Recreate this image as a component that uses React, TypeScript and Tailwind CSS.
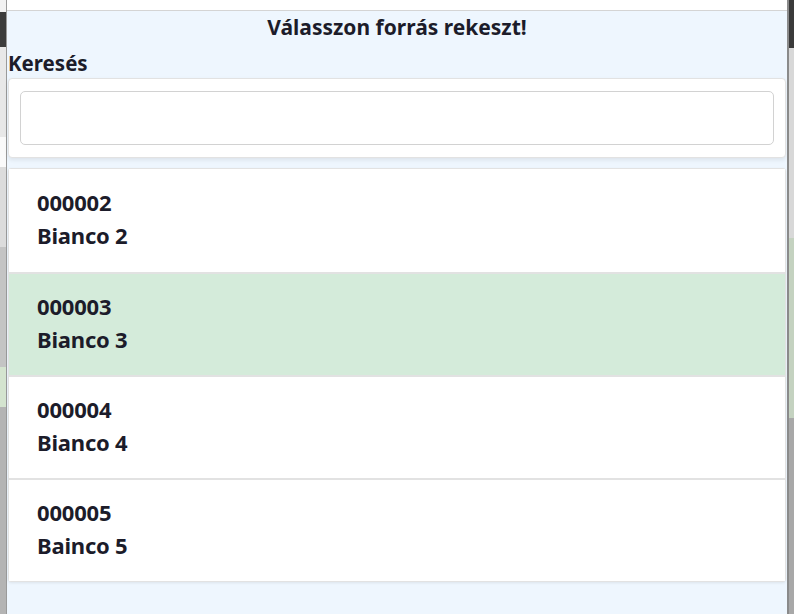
import React from 'react';

const items = [
  { code: '000002', name: 'Bianco 2', selected: false },
  { code: '000003', name: 'Bianco 3', selected: true },
  { code: '000004', name: 'Bianco 4', selected: false },
  { code: '000005', name: 'Bainco 5', selected: false },
];

export default function App() {
  return (
    <div
      className="flex w-[794px] h-[614px] overflow-hidden bg-[#c8c8c8] text-[#1c1c2a]"
      style={{ fontFamily: '"Noto Sans", "Open Sans", sans-serif' }}
    >
      {/* background page peeking on the left */}
      <div className="flex flex-col w-[7px] shrink-0 bg-[#d6d6d6] border-r border-[#9a9a9a]">
        <div className="h-[12px] bg-[#f2f2f2]" />
        <div className="h-[35px] bg-[#3c3c3c]" />
        <div className="h-[90px] bg-[#e8e8e8]" />
        <div className="h-[30px] bg-[#fafafa]" />
        <div className="h-[80px] bg-[#dcdcdc]" />
        <div className="h-[120px] bg-[#c4c4c4]" />
        <div className="h-[40px] bg-[#d4e4cf]" />
        <div className="flex-1 bg-[#b4b4b4]" />
      </div>

      {/* modal */}
      <div className="flex flex-col w-[780px] shrink-0 bg-[#eef6fe]">
        <div className="h-[11px] bg-white border-b border-[#d4d4d4]" />
        <div className="h-[34px] flex items-center justify-center text-[21px] font-bold">
          Válasszon forrás rekeszt!
        </div>
        <div className="h-[33px] flex items-center pl-[1px] pt-[4px] text-[20.5px] font-bold">Keresés</div>

        <div className="mx-[1px] bg-white border border-[#e2e2e2] rounded-[4px] shadow-[0_2px_4px_rgba(0,0,0,0.08)] px-[11px] py-[12px]">
          <input className="block w-full h-[54px] rounded-[5px] border border-[#d2d2d2] bg-white outline-none px-3" />
        </div>

        <div className="mt-[10px] mx-[1px] bg-white border border-[#e2e2e2] rounded-[3px] shadow-[0_1px_3px_rgba(0,0,0,0.08)]">
          {items.map((it, i) => (
            <div
              key={it.code}
              className={
                'h-[103px] flex flex-col justify-center pl-[28px] pb-[3px] gap-[8px] text-[22px] font-bold leading-[25px] tracking-[-0.2px] ' +
                (i > 0 ? 'border-t-2 border-[#e2e2e2] ' : '') +
                (it.selected ? 'bg-[#d4ebda]' : 'bg-white')
              }
            >
              <div>{it.code}</div>
              <div>{it.name}</div>
            </div>
          ))}
        </div>
        <div className="flex-1" />
      </div>

      {/* background page peeking on the right */}
      <div className="flex flex-col flex-1 border-l-2 border-[#8a8a8a] bg-[#cfcfcf]">
        <div className="h-[48px] bg-[#3a3a3a]" />
        <div className="h-[190px] bg-[#d8d8d8]" />
        <div className="h-[180px] bg-[#c4d2c0]" />
        <div className="flex-1 bg-[#a8a8a8]" />
      </div>
    </div>
  );
}
